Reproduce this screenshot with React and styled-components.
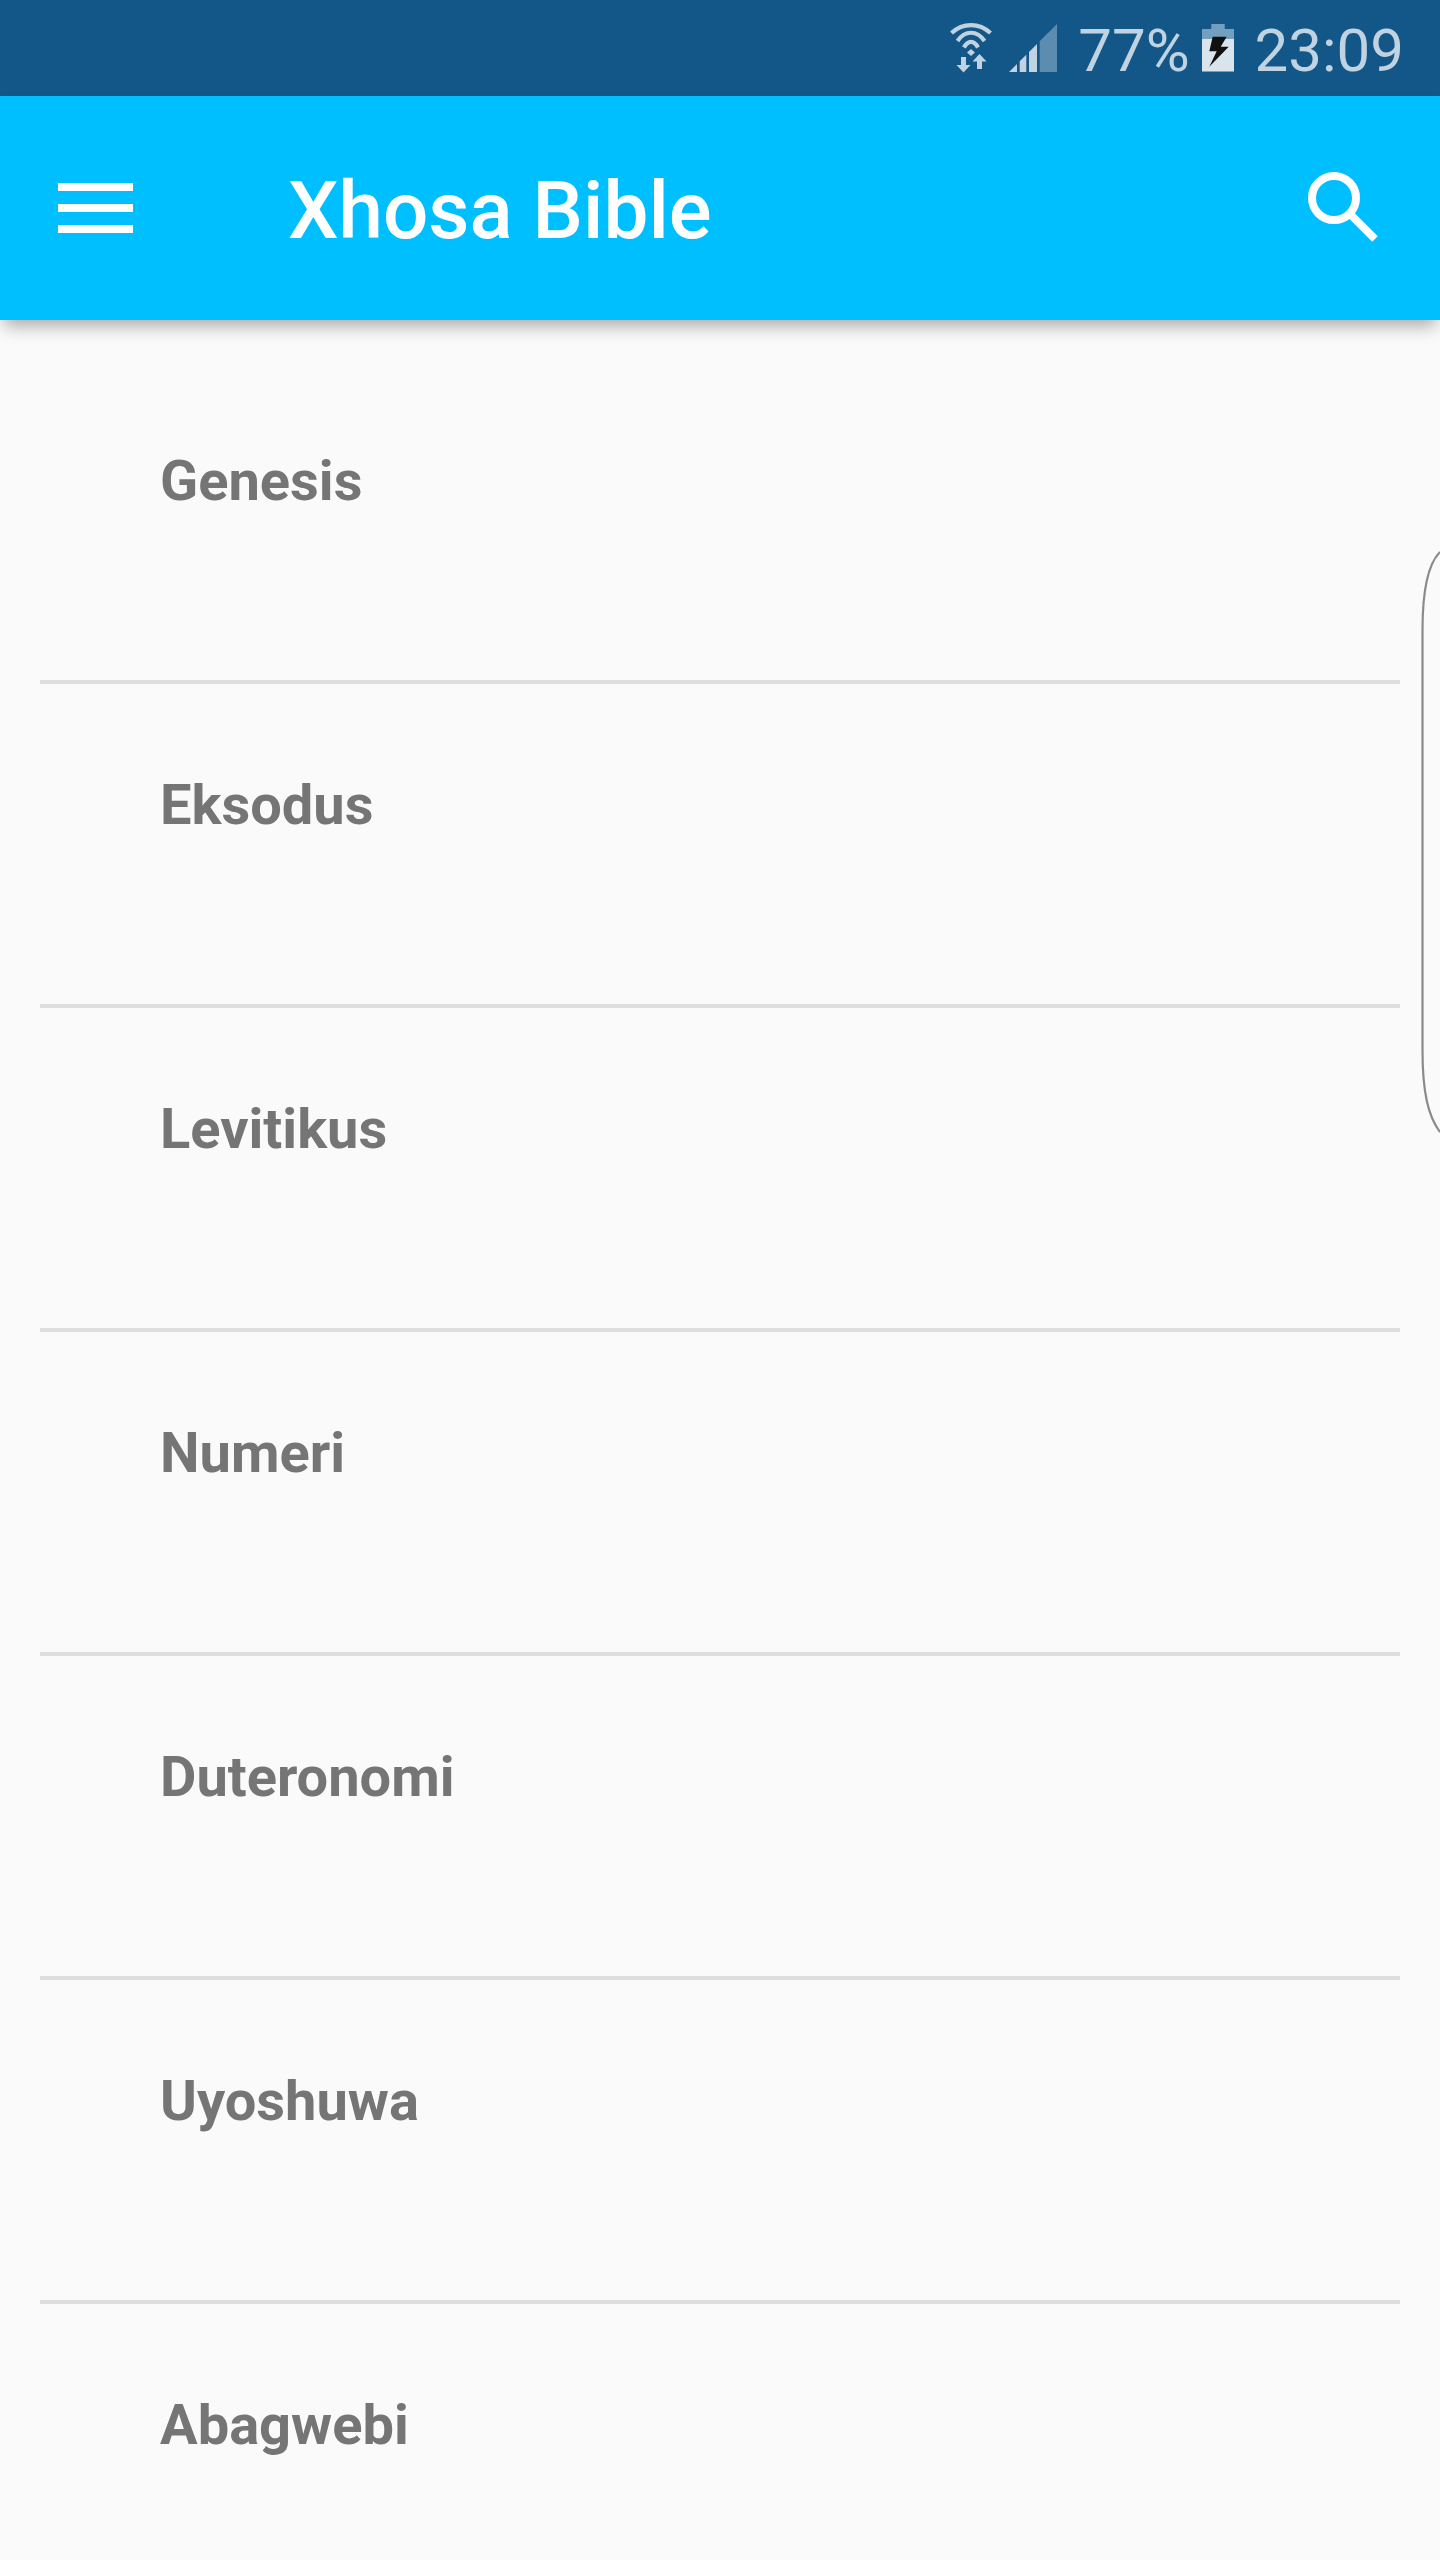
import React from 'react';
import styled, { createGlobalStyle } from 'styled-components';

const Global = createGlobalStyle`
  html, body { margin: 0; padding: 0; background: #fafafa; }
  body { font-family: Roboto, "Liberation Sans", sans-serif; }
`;

const Page = styled.div`
  position: relative;
  width: 1440px;
  height: 2560px;
  overflow: hidden;
  background: #fafafa;
`;

const StatusBar = styled.div`
  height: 96px;
  background: #135789;
  display: flex;
  align-items: center;
  justify-content: flex-end;
  padding-right: 36px;
  box-sizing: border-box;
  color: #c1d3e1;
`;

const StatusText = styled.span`
  font-size: 60px;
  font-weight: 400;
  line-height: 96px;
  padding-top: 6px;
  margin-left: ${p => p.$ml}px;
`;

const StatusIcon = styled.svg`
  display: block;
  flex: none;
  margin-left: ${p => p.$ml || 0}px;
`;

const AppBar = styled.header`
  position: relative;
  z-index: 1;
  height: 224px;
  background: #00bfff;
  display: flex;
  align-items: center;
  box-shadow: 0 10px 16px -4px rgba(0, 0, 0, 0.32);
  color: #fff;
`;

const MenuButton = styled.div`
  width: 75px;
  margin-left: 58px;
  display: flex;
  flex-direction: column;
  gap: 13px;
  flex: none;
`;

const MenuBar = styled.span`
  display: block;
  height: 8px;
  background: #fff;
`;

const Title = styled.h1`
  margin: 0 0 0 155px;
  padding-top: 6px;
  font-size: 80px;
  font-weight: 500;
  line-height: 224px;
  flex: 1;
`;

const SearchIcon = styled.svg`
  display: block;
  flex: none;
  margin-right: 60px;
`;

const List = styled.main`
  padding: 40px 40px 0;
`;

const Row = styled.div`
  height: 320px;
  box-sizing: content-box;
  border-bottom: 4px solid #dedede;
  padding-left: 120px;
`;

const RowLabel = styled.div`
  padding-top: 89px;
  font-size: 56px;
  line-height: 64px;
  font-weight: 700;
  color: #757575;
`;

const EdgeHandle = styled.svg`
  position: absolute;
  top: 540px;
  right: 0;
  display: block;
`;

const books = ['Genesis', 'Eksodus', 'Levitikus', 'Numeri', 'Duteronomi', 'Uyoshuwa', 'Abagwebi'];

export default function App() {
  return (
    <Page>
      <Global />
      <StatusBar>
        <StatusIcon width="42" height="50" viewBox="0 0 42 50" fill="none">
          <g stroke="#c1d3e1" strokeWidth="4.2">
            <path d="M1.500 10C13 -0.500 29 -0.500 40.500 10" />
            <path d="M7.500 18C15 7 27 7 34.500 18" />
            <path d="M14 24.500C18 17 24 17 28 24.500" />
          </g>
          <path d="M21 26L25 29.500L21 33L17 29.500Z" fill="#c1d3e1" />
          <path d="M11 34h5v8h4.500L13.500 49.500L6.500 42H11Z" fill="#c1d3e1" />
          <path d="M29.500 31L36.500 38.500H32V46H27V38.500H22.500Z" fill="#c1d3e1" />
        </StatusIcon>
        <StatusIcon $ml={17} width="48" height="50" viewBox="0 0 48 50">
          <path d="M0 49L8 41V49Z" fill="#c1d3e1" />
          <path d="M10.700 38.300L17.300 31.700V49H10.700Z" fill="#c1d3e1" />
          <path d="M20 29L28 21V49H20Z" fill="#c1d3e1" />
          <path d="M30.700 18.300L48 1V49H30.700Z" fill="#5c8db0" />
        </StatusIcon>
        <StatusText $ml={21}>77%</StatusText>
        <StatusIcon $ml={12} width="32" height="50" viewBox="0 -1 32 50">
          <path d="M9.300 0H22.700V5H32V15H0V5H9.300Z" fill="#74a0c0" />
          <path d="M0 15H32V47.500H0Z" fill="#dae4ec" />
          <path d="M10.700 12.700H24.700L18.700 22.700H26.700L7.300 42.700L14.700 27.300H7.300Z" fill="#111" />
        </StatusIcon>
        <StatusText $ml={21}>23:09</StatusText>
      </StatusBar>
      <AppBar>
        <MenuButton>
          <MenuBar />
          <MenuBar />
          <MenuBar />
        </MenuButton>
        <Title>Xhosa Bible</Title>
        <SearchIcon width="72" height="72" viewBox="0 0 72 72" fill="none">
          <circle cx="26" cy="26" r="22" stroke="#fff" strokeWidth="8" />
          <path d="M43 43L67 67" stroke="#fff" strokeWidth="8" />
        </SearchIcon>
      </AppBar>
      <List>
        {books.map(b => (
          <Row key={b}>
            <RowLabel>{b}</RowLabel>
          </Row>
        ))}
      </List>
      <EdgeHandle width="20" height="604" viewBox="0 0 20 604" fill="none">
        <path d="M20 12C8 24 2.500 48 2.500 90V510C2.500 552 8 576 20 592" stroke="#8a8a8a" strokeWidth="2.200" />
      </EdgeHandle>
    </Page>
  );
}
